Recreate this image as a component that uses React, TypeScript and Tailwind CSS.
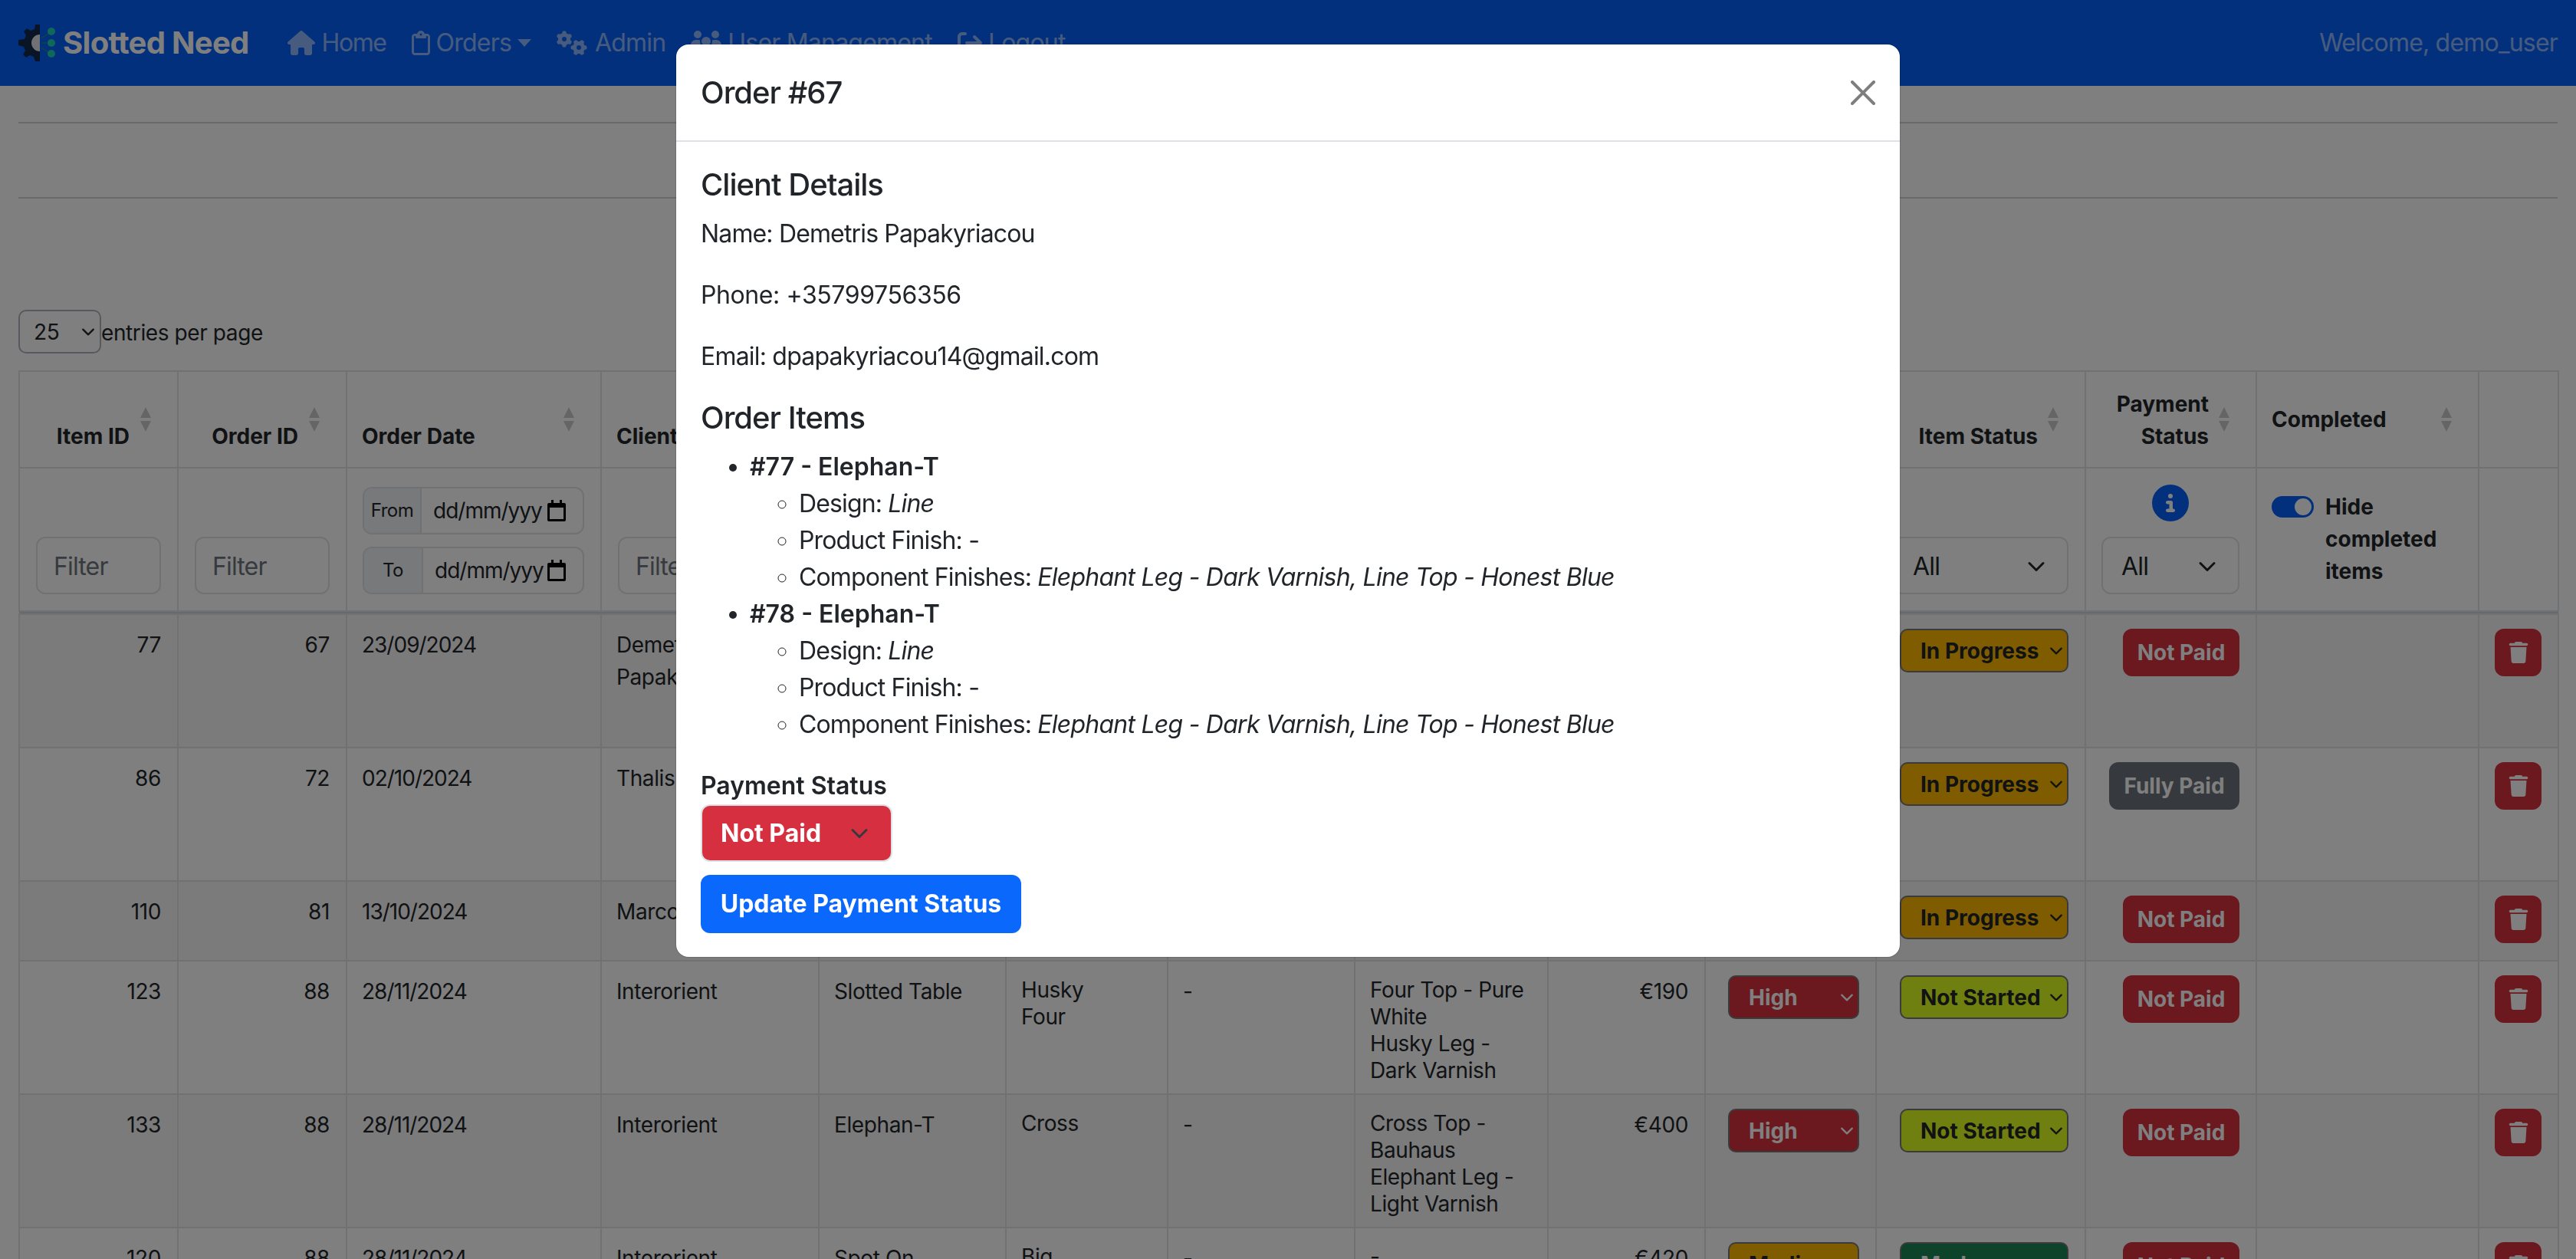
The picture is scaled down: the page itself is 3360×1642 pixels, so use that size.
import { FaHouse, FaRegClipboard, FaGears, FaUsers, FaArrowRightFromBracket, FaCircleInfo, FaTrash } from "react-icons/fa6";

type Row = {
  item: number;
  order: number;
  date: string;
  client: string;
  product: string;
  design: string[];
  finish: string;
  comps: string[];
  price: string;
  priority: string;
  status: string;
  paid: string;
  height: string;
};

const rows: Row[] = [
  { item: 77, order: 67, date: "23/09/2024", client: "Demetris Papakyriacou", product: "Elephan-T", design: ["Line"], finish: "-", comps: ["Elephant Leg -", "Dark Varnish", "Line Top -", "Honest Blue"], price: "€350", priority: "Medium", status: "In Progress", paid: "Not Paid", height: "h-[174px]" },
  { item: 86, order: 72, date: "02/10/2024", client: "Thalis Georgiou", product: "Slotted Table", design: ["Husky", "Four"], finish: "-", comps: ["Four Top - Pure", "White", "Husky Leg -", "Dark Varnish"], price: "€190", priority: "Medium", status: "In Progress", paid: "Fully Paid", height: "h-[174px]" },
  { item: 110, order: 81, date: "13/10/2024", client: "Marcos", product: "Spot On", design: ["Big"], finish: "-", comps: ["-"], price: "€420", priority: "Medium", status: "In Progress", paid: "Not Paid", height: "h-[104px]" },
  { item: 123, order: 88, date: "28/11/2024", client: "Interorient", product: "Slotted Table", design: ["Husky", "Four"], finish: "-", comps: ["Four Top - Pure", "White", "Husky Leg -", "Dark Varnish"], price: "€190", priority: "High", status: "Not Started", paid: "Not Paid", height: "h-[174px]" },
  { item: 133, order: 88, date: "28/11/2024", client: "Interorient", product: "Elephan-T", design: ["Cross"], finish: "-", comps: ["Cross Top -", "Bauhaus", "Elephant Leg -", "Light Varnish"], price: "€400", priority: "High", status: "Not Started", paid: "Not Paid", height: "h-[174px]" },
  { item: 120, order: 88, date: "28/11/2024", client: "Interorient", product: "Spot On", design: ["Big"], finish: "-", comps: ["-"], price: "€420", priority: "Medium", status: "Made", paid: "Not Paid", height: "h-[174px]" },
];

const selectColors: Record<string, string> = {
  High: "bg-[#d6303e] text-white",
  Medium: "bg-[#ffb800] text-[#212529]",
  "In Progress": "bg-[#ffb800] text-[#212529]",
  "Not Started": "bg-[#dfff20] text-[#212529]",
  Made: "bg-[#198754] text-white",
};

function Chevron({ size = 24, className = "" }: { size?: number; className?: string }) {
  return (
    <svg width={size} height={size} viewBox="0 0 16 16" fill="none" stroke="currentColor" strokeWidth="2" strokeLinecap="round" strokeLinejoin="round" className={className}>
      <path d="m2 5 6 6 6-6" />
    </svg>
  );
}

function SortArrows() {
  return (
    <svg width="14" height="32" viewBox="0 0 14 32" className="absolute top-[46px] right-[34px] opacity-20">
      <path d="M7 0 14 14H0Z" />
      <path d="M0 18H14L7 32Z" />
    </svg>
  );
}

function Logo() {
  return (
    <svg width="48" height="48" viewBox="0 0 48 48" className="shrink-0">
      <path d="M28 0h-6l-1 6-5 2-5-3-4 4 3 5-2 5-8 1v7l7 2 2 5-3 5 4 4 5-3 5 2 2 6h6Z" fill="#13294b" />
      <path d="M28 13a11 11 0 0 0 0 22Z" fill="#dfe3ea" />
      <path d="M30 18 43 9M30 24h13M30 30l13 9" stroke="#1a8f80" strokeWidth="1.5" fill="none" />
      <circle cx="43" cy="9" r="5" fill="#1fd0b0" />
      <circle cx="43" cy="24" r="5" fill="#1fd0b0" />
      <circle cx="43" cy="38" r="5" fill="#1fd0b0" />
    </svg>
  );
}

function CalendarIcon() {
  return (
    <svg width="24" height="28" viewBox="0 0 24 28" className="shrink-0">
      <path d="M5 0h3v4h8V0h3v4h3a2 2 0 0 1 2 2v20a2 2 0 0 1-2 2H2a2 2 0 0 1-2-2V6a2 2 0 0 1 2-2h3Zm-2 10v15h18V10Z" fillRule="evenodd" />
    </svg>
  );
}

function Filter() {
  return (
    <div className="flex h-[75px] items-center rounded-[12px] border-2 border-[#dee2e6] pt-[2px] pl-[21px] text-[32px] tracking-[-0.85px] text-[#6c757d]">Filter</div>
  );
}

function DateFilter({ label, prefixWidth }: { label: string; prefixWidth: string }) {
  return (
    <div className="flex h-[62px] overflow-hidden rounded-[12px] border-2 border-[#dee2e6] text-[28px] font-normal tracking-[-1px]">
      <div className={`flex items-center justify-center border-r-2 border-[#dee2e6] bg-[#f0f2f4] text-[24px] tracking-[-0.5px] ${prefixWidth}`}>{label}</div>
      <div className="flex flex-1 items-center justify-between pr-[22px] pl-[15px]">
        <span>dd/mm/yyy</span>
        <CalendarIcon />
      </div>
    </div>
  );
}

function AllSelect({ className = "" }: { className?: string }) {
  return (
    <div className={`flex h-[75px] items-center justify-between rounded-[12px] border-2 border-[#dee2e6] pt-[2px] pr-[28px] pl-[24px] text-[32px] font-normal tracking-[-0.85px] ${className}`}>
      <span>All</span>
      <Chevron />
    </div>
  );
}

function Head({ children, className = "", align = "align-bottom" }: { children?: React.ReactNode; className?: string; align?: string }) {
  return (
    <th className={`relative border-2 border-[#dee2e6] pr-[21px] pb-[19px] pl-[19px] text-[28px] leading-[42px] font-bold ${align} ${className}`}>
      {children}
      <SortArrows />
    </th>
  );
}

function Cell({ children, className = "" }: { children?: React.ReactNode; className?: string }) {
  return <td className={`border-2 border-[#dee2e6] pt-[18px] pr-[21px] pl-[19px] align-top text-[28px] leading-[42px] tracking-[-0.4px] ${className}`}>{children}</td>;
}

function StateSelect({ value, width }: { value: string; width: string }) {
  return (
    <div className={`ml-auto flex h-[57px] items-center justify-between rounded-[10px] border-2 border-[#777777] pr-[5px] pl-[25px] text-[28px] font-bold tracking-normal ${width} ${selectColors[value]}`}>
      <span className="whitespace-nowrap">{value}</span>
      <Chevron size={18} />
    </div>
  );
}

function App() {
  return (
    <div className="relative h-[1642px] w-[3360px] overflow-hidden bg-white font-[Inter,sans-serif] text-[#212529]">
      <nav className="flex h-[112px] items-center gap-[33px] bg-[#0460fa] pr-6 pl-6 text-[32px] tracking-[-0.8px] text-white/55">
        <div className="mr-[17px] flex items-center gap-[10px]">
          <Logo />
          <span className="text-[40px] font-bold tracking-[-0.7px] text-white">Slotted Need</span>
        </div>
        <a className="flex items-center gap-[9px] tracking-[-1.4px]"><FaHouse size={36} />Home</a>
        <a className="flex items-center gap-[8px]"><FaRegClipboard size={32} className="w-[24px]" />Orders<span className="h-0 w-0 border-x-[9px] border-t-[10px] border-x-transparent border-t-current" /></a>
        <a className="flex items-center gap-[10px]"><FaGears size={40} />Admin</a>
        <a className="flex items-center gap-[8px]"><FaUsers size={40} />User Management</a>
        <a className="flex items-center gap-[8px]"><FaArrowRightFromBracket size={32} />Logout</a>
        <span className="ml-auto">Welcome, demo_user</span>
      </nav>

      <main className="px-6">
        <hr className="mt-[47px] border-t-2 border-[#ced4da]" />
        <hr className="mt-[96px] border-t-2 border-[#ced4da]" />
        <div className="mt-[145px] flex items-center text-[28px] tracking-[-0.4px]">
          <div className="flex h-[57px] w-[108px] items-center justify-between rounded-[10px] border-2 border-[#adb5bd] pr-[6px] pl-[18px]">
            <span>25</span>
            <Chevron size={18} />
          </div>
          <span className="pt-[2px]">entries per page</span>
        </div>

        <table className="mt-[22px] w-[3312px] table-fixed border-collapse">
          <colgroup>
            <col className="w-[207px]" />
            <col className="w-[220px]" />
            <col className="w-[332px]" />
            <col className="w-[284px]" />
            <col className="w-[244px]" />
            <col className="w-[211px]" />
            <col className="w-[244px]" />
            <col className="w-[252px]" />
            <col className="w-[205px]" />
            <col className="w-[223px]" />
            <col className="w-[273px]" />
            <col className="w-[223px]" />
            <col className="w-[290px]" />
            <col className="w-[104px]" />
          </colgroup>
          <thead>
            <tr className="h-[126px] border-b-2 border-b-[#aaaaaa]">
              <Head className="!pr-[62px] text-right">Item ID</Head>
              <Head className="!pr-[62px] text-right">Order ID</Head>
              <Head className="text-left">Order Date</Head>
              <Head className="text-left">Client</Head>
              <Head className="text-left">Product</Head>
              <Head className="text-left">Design</Head>
              <Head className="text-left">Finish</Head>
              <Head className="text-left">Component Finishes</Head>
              <Head className="!pr-[62px] text-right">Price</Head>
              <Head className="!pr-[62px] text-right">Priority</Head>
              <Head className="!pr-[61px] text-right">Item Status</Head>
              <Head className="!pr-[61px] text-right">Payment Status</Head>
              <Head className="text-left" align="align-middle !pb-0">Completed</Head>
              <th className="border-2 border-[#dee2e6]" />
            </tr>
            <tr className="h-[187px]">
              <td className="border-2 border-[#dee2e6] px-[21px] pb-[21px] align-bottom"><Filter /></td>
              <td className="border-2 border-[#dee2e6] px-[21px] pb-[21px] align-bottom"><Filter /></td>
              <td className="border-2 border-[#dee2e6] pr-[21px] pb-[21px] pl-[20px] align-bottom">
                <div className="flex flex-col gap-[16px]">
                  <DateFilter label="From" prefixWidth="w-[75px]" />
                  <DateFilter label="To" prefixWidth="w-[77px]" />
                </div>
              </td>
              <td className="border-2 border-[#dee2e6] px-[21px] pb-[21px] align-bottom"><Filter /></td>
              <td className="border-2 border-[#dee2e6] px-[21px] pb-[21px] align-bottom"><Filter /></td>
              <td className="border-2 border-[#dee2e6] px-[21px] pb-[21px] align-bottom"><Filter /></td>
              <td className="border-2 border-[#dee2e6] px-[21px] pb-[21px] align-bottom"><Filter /></td>
              <td className="border-2 border-[#dee2e6] px-[21px] pb-[21px] align-bottom"><Filter /></td>
              <td className="border-2 border-[#dee2e6] px-[21px] pb-[21px] align-bottom"><Filter /></td>
              <td className="border-2 border-[#dee2e6] px-[21px] pb-[21px] align-bottom"><AllSelect /></td>
              <td className="border-2 border-[#dee2e6] px-[21px] pb-[21px] align-bottom"><AllSelect className="!pl-[24px]" /></td>
              <td className="border-2 border-[#dee2e6] pr-[21px] pb-[21px] pl-[20px] align-bottom">
                <div className="flex flex-col items-center gap-[20px]">
                  <FaCircleInfo size={48} className="text-[#0560fb]" />
                  <AllSelect className="w-full" />
                </div>
              </td>
              <td className="border-2 border-[#dee2e6] pr-[21px] pl-[19px] align-middle">
                <div className="mt-[-2px] flex items-start gap-[15px] text-[28px] leading-[42px] font-bold">
                  <div className="mt-[7px] flex h-[28px] w-[55px] shrink-0 items-center justify-end rounded-full bg-[#0560fb] pr-[3px]">
                    <div className="h-[22px] w-[22px] rounded-full bg-white" />
                  </div>
                  <span>Hide completed items</span>
                </div>
              </td>
              <td className="border-2 border-[#dee2e6]" />
            </tr>
            <tr className="h-[4px] bg-[#ced4da]"><td colSpan={14} className="p-0" /></tr>
          </thead>
          <tbody>
            {rows.map((r, i) => (
              <tr key={r.item} className={`${r.height} ${i % 2 === 0 ? "bg-black/[0.03]" : ""}`}>
                <Cell className="text-right">{r.item}</Cell>
                <Cell className="text-right">{r.order}</Cell>
                <Cell className="!tracking-[-1px]">{r.date}</Cell>
                <Cell>{r.client}</Cell>
                <Cell>{r.product}</Cell>
                <Cell className="!pt-[20px] !leading-[35px]">{r.design.map((d) => <div key={d}>{d}</div>)}</Cell>
                <Cell>{r.finish}</Cell>
                <Cell className="!pt-[20px] !leading-[35px]">{r.comps.map((c) => <div key={c}>{c}</div>)}</Cell>
                <Cell className="text-right">{r.price}</Cell>
                <Cell><StateSelect value={r.priority} width="w-[171px]" /></Cell>
                <Cell><StateSelect value={r.status} width="w-[220px]" /></Cell>
                <Cell>
                  <div className={`ml-auto flex h-[62px] items-center justify-center rounded-[12px] font-bold tracking-normal text-white ${r.paid === "Not Paid" ? "w-[152px] bg-[#d6303e]" : "w-[170px] bg-[#6c757d]"}`}>{r.paid}</div>
                </Cell>
                <Cell />
                <Cell>
                  <div className="ml-auto flex h-[62px] w-[61px] items-center justify-center rounded-[12px] bg-[#d6303e] text-white"><FaTrash size={28} /></div>
                </Cell>
              </tr>
            ))}
          </tbody>
        </table>
      </main>

      <div className="fixed inset-0 bg-black/50">
        <div className="mx-auto mt-[58px] h-[1190px] w-[1596px] rounded-[16px] bg-white shadow-[0_0_2px_rgba(0,0,0,0.4)]">
          <div className="flex h-[127px] items-center justify-between border-b-2 border-[#dee2e6] px-[32px]">
            <h5 className="text-[40px] font-medium tracking-[-1px]">Order #67</h5>
            <svg width="32" height="32" viewBox="0 0 16 16" className="opacity-50">
              <path d="M.293.293a1 1 0 0 1 1.414 0L8 6.586 14.293.293a1 1 0 1 1 1.414 1.414L9.414 8l6.293 6.293a1 1 0 0 1-1.414 1.414L8 9.414l-6.293 6.293a1 1 0 0 1-1.414-1.414L6.586 8 .293 1.707a1 1 0 0 1 0-1.414z" />
            </svg>
          </div>
          <div className="px-[32px] pt-[32px] text-[32px] leading-[48px] tracking-[-0.85px]">
            <h5 className="mb-[16px] text-[40px] font-medium tracking-[-1px]">Client Details</h5>
            <p className="mb-[32px]">Name: Demetris Papakyriacou</p>
            <p className="mb-[32px] tracking-[-0.4px]">Phone: +35799756356</p>
            <p className="mb-[32px] tracking-[-0.8px]">Email: dpapakyriacou14@gmail.com</p>
            <h5 className="mb-[16px] text-[40px] font-medium tracking-[-1px]">Order Items</h5>
            <ul className="mb-[32px] list-disc pl-[64px]">
              {[77, 78].map((n) => (
                <li key={n}>
                  <strong className="font-semibold tracking-normal">#{n} - Elephan-T</strong>
                  <ul className="list-[circle] pl-[64px]">
                    <li>Design: <em>Line</em></li>
                    <li>Product Finish: -</li>
                    <li>Component Finishes: <em className="tracking-[-0.75px]">Elephant Leg - Dark Varnish, Line Top - Honest Blue</em></li>
                  </ul>
                </li>
              ))}
            </ul>
            <label className="block font-semibold tracking-normal">Payment Status</label>
            <div className="flex h-[75px] w-[250px] items-center justify-between rounded-[12px] border-2 border-[#dee2e6] bg-[#d62f3f] pr-[29px] pl-[24px] font-bold tracking-normal text-white">
              <span>Not Paid</span>
              <Chevron className="text-[#343a40]" />
            </div>
            <button className="mt-[17px] flex h-[76px] w-[418px] items-center justify-center rounded-[12px] bg-[#0b68fd] font-bold tracking-normal text-white">Update Payment Status</button>
          </div>
        </div>
      </div>
    </div>
  );
}

export default App;
